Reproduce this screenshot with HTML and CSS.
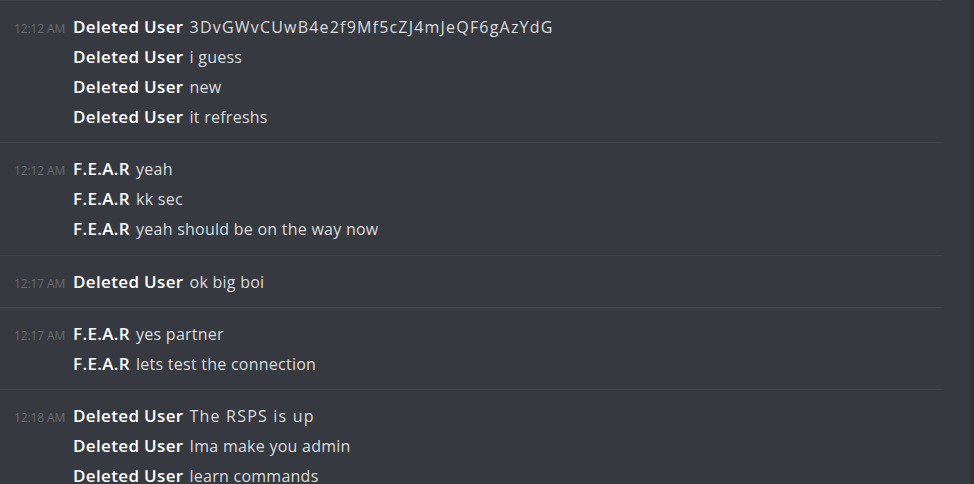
FILE: index.html
```html
<!DOCTYPE html>
<html>
<head>
<meta charset="utf-8">
<link rel="stylesheet" href="styles.css">
</head>
<body>
<div class="app">
  <div class="chat">
    <div class="group">
      <div class="line"><span class="time">12:12 AM</span><span class="name">Deleted User</span><span class="msg wide">3DvGWvCUwB4e2f9Mf5cZJ4mJeQF6gAzYdG</span></div>
      <div class="line"><span class="time"></span><span class="name">Deleted User</span><span class="msg">i guess</span></div>
      <div class="line"><span class="time"></span><span class="name">Deleted User</span><span class="msg">new</span></div>
      <div class="line"><span class="time"></span><span class="name">Deleted User</span><span class="msg">it refreshs</span></div>
    </div>
    <div class="group">
      <div class="line"><span class="time">12:12 AM</span><span class="name">F.E.A.R</span><span class="msg">yeah</span></div>
      <div class="line"><span class="time"></span><span class="name">F.E.A.R</span><span class="msg">kk sec</span></div>
      <div class="line"><span class="time"></span><span class="name">F.E.A.R</span><span class="msg">yeah should be on the way now</span></div>
    </div>
    <div class="group">
      <div class="line"><span class="time">12:17 AM</span><span class="name">Deleted User</span><span class="msg">ok big boi</span></div>
    </div>
    <div class="group">
      <div class="line"><span class="time">12:17 AM</span><span class="name">F.E.A.R</span><span class="msg">yes partner</span></div>
      <div class="line"><span class="time"></span><span class="name">F.E.A.R</span><span class="msg">lets test the connection</span></div>
    </div>
    <div class="group">
      <div class="line"><span class="time">12:18 AM</span><span class="name">Deleted User</span><span class="msg wide">The RSPS is up</span></div>
      <div class="line"><span class="time"></span><span class="name">Deleted User</span><span class="msg">Ima make you admin</span></div>
      <div class="line"><span class="time"></span><span class="name">Deleted User</span><span class="msg">learn commands</span></div>
    </div>
  </div>
  <div class="scrollbar"></div>
</div>
</body>
</html>
```
FILE: styles.css
```css
html, body {
  margin: 0;
  padding: 0;
  background: #36393f;
  height: 100%;
  overflow: hidden;
}
.app {
  display: flex;
  height: 484px;
  font-family: "Open Sans", "Noto Sans", sans-serif;
}
.chat {
  width: 942px;
  flex: none;
}
.scrollbar {
  margin-left: auto;
  width: 4px;
  background: #2f3136;
  height: 100%;
}
.group {
  border-top: 1px solid #40434a;
  padding: 11px 0 10px;
}
.group:nth-child(2) {
  padding-bottom: 11px;
}
.line {
  display: flex;
  align-items: baseline;
  height: 30px;
  line-height: 30px;
  white-space: nowrap;
}
.time {
  width: 59px;
  padding-left: 14px;
  flex: none;
  font-size: 12px;
  letter-spacing: -0.1px;
  color: #686b71;
}
.name {
  font-size: 17px;
  font-weight: 600;
  letter-spacing: 0.35px;
  color: #ffffff;
  margin-right: 6px;
}
.msg {
  font-size: 16px;
  letter-spacing: 0.25px;
  color: #dcddde;
}
.msg.wide {
  letter-spacing: 1.2px;
}
```
